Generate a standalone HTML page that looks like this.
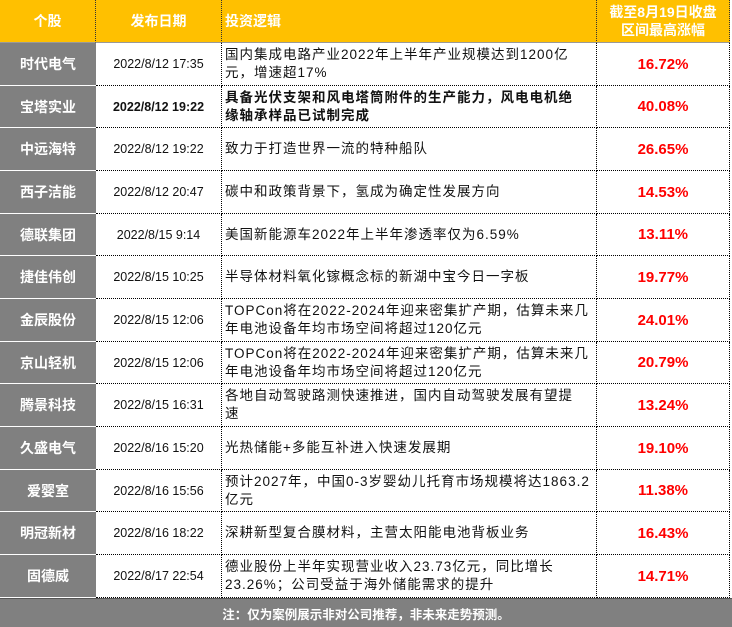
<!DOCTYPE html>
<html><head><meta charset="utf-8"><style>
*{margin:0;padding:0;box-sizing:border-box}
body{width:732px;height:627px;background:#fff;font-family:"Liberation Sans","Noto Sans CJK SC",sans-serif;position:relative;overflow:hidden}
.c{position:absolute;display:flex;align-items:center;overflow:hidden;white-space:nowrap}
.h{background:#ffc000;color:#fff;font-weight:bold;font-size:14px;justify-content:center;top:0;height:43px;border-right:1px dotted #333;border-bottom:1px solid #999}
.n{left:0;width:96px;background:#808080;color:#fff;font-weight:bold;font-size:14px;justify-content:center;border-bottom:1px solid #fff}
.d{left:96px;width:126px;font-size:12.5px;justify-content:center;border-right:1px dotted #000;border-bottom:1px dotted #000;color:#111}
.t{left:222px;width:375px;font-size:13.5px;line-height:18px;padding:0 3px;border-right:1px dotted #000;border-bottom:1px dotted #000;color:#111;letter-spacing:1px}
.p{left:597px;width:133px;font-size:15px;color:#f00;font-weight:bold;justify-content:center;border-bottom:1px dotted #000;border-right:1px dotted #000}
.b{font-weight:bold}
.r1{top:43px;height:43px}.r2{top:86px;height:42px}.r3{top:128px;height:43px}.r4{top:171px;height:43px}.r5{top:214px;height:42px}.r6{top:256px;height:43px}.r7{top:299px;height:43px}.r8{top:342px;height:42px}.r9{top:384px;height:43px}.r10{top:427px;height:43px}.r11{top:470px;height:42px}.r12{top:512px;height:43px}.r13{top:555px;height:43px}
</style></head><body>
<div class="c h" style="left:0;width:96px">个股</div>
<div class="c h" style="left:96px;width:126px">发布日期</div>
<div class="c h" style="left:222px;width:375px;justify-content:flex-start;padding-left:3px">投资逻辑</div>
<div class="c h" style="left:597px;width:133px;text-align:center;line-height:18px">截至8月19日收盘<br>区间最高涨幅</div>

<div class="c n r1">时代电气</div><div class="c d r1">2022/8/12 17:35</div><div class="c t r1"><div>国内集成电路产业2022年上半年产业规模达到1200亿<br>元，增速超17%</div></div><div class="c p r1">16.72%</div>
<div class="c n r2">宝塔实业</div><div class="c d b r2">2022/8/12 19:22</div><div class="c t b r2"><div>具备光伏支架和风电塔筒附件的生产能力，风电电机绝<br>缘轴承样品已试制完成</div></div><div class="c p r2">40.08%</div>
<div class="c n r3">中远海特</div><div class="c d r3">2022/8/12 19:22</div><div class="c t r3"><div>致力于打造世界一流的特种船队</div></div><div class="c p r3">26.65%</div>
<div class="c n r4">西子洁能</div><div class="c d r4">2022/8/12 20:47</div><div class="c t r4"><div>碳中和政策背景下，氢成为确定性发展方向</div></div><div class="c p r4">14.53%</div>
<div class="c n r5">德联集团</div><div class="c d r5">2022/8/15 9:14</div><div class="c t r5"><div>美国新能源车2022年上半年渗透率仅为6.59%</div></div><div class="c p r5">13.11%</div>
<div class="c n r6">捷佳伟创</div><div class="c d r6">2022/8/15 10:25</div><div class="c t r6"><div>半导体材料氧化镓概念标的新湖中宝今日一字板</div></div><div class="c p r6">19.77%</div>
<div class="c n r7">金辰股份</div><div class="c d r7">2022/8/15 12:06</div><div class="c t r7"><div>TOPCon将在2022-2024年迎来密集扩产期，估算未来几<br>年电池设备年均市场空间将超过120亿元</div></div><div class="c p r7">24.01%</div>
<div class="c n r8">京山轻机</div><div class="c d r8">2022/8/15 12:06</div><div class="c t r8"><div>TOPCon将在2022-2024年迎来密集扩产期，估算未来几<br>年电池设备年均市场空间将超过120亿元</div></div><div class="c p r8">20.79%</div>
<div class="c n r9">腾景科技</div><div class="c d r9">2022/8/15 16:31</div><div class="c t r9"><div>各地自动驾驶路测快速推进，国内自动驾驶发展有望提<br>速</div></div><div class="c p r9">13.24%</div>
<div class="c n r10">久盛电气</div><div class="c d r10">2022/8/16 15:20</div><div class="c t r10"><div>光热储能+多能互补进入快速发展期</div></div><div class="c p r10">19.10%</div>
<div class="c n r11">爱婴室</div><div class="c d r11">2022/8/16 15:56</div><div class="c t r11"><div>预计2027年，中国0-3岁婴幼儿托育市场规模将达1863.2<br>亿元</div></div><div class="c p r11">11.38%</div>
<div class="c n r12">明冠新材</div><div class="c d r12">2022/8/16 18:22</div><div class="c t r12"><div>深耕新型复合膜材料，主营太阳能电池背板业务</div></div><div class="c p r12">16.43%</div>
<div class="c n r13">固德威</div><div class="c d r13">2022/8/17 22:54</div><div class="c t r13"><div>德业股份上半年实现营业收入23.73亿元，同比增长<br>23.26%；公司受益于海外储能需求的提升</div></div><div class="c p r13">14.71%</div>

<div class="c" style="left:0;top:598px;width:732px;height:29px;background:#808080;color:#fff;font-weight:bold;font-size:12.5px;justify-content:center;border-top:1px solid #555">注：仅为案例展示非对公司推荐，非未来走势预测。</div>
</body></html>
